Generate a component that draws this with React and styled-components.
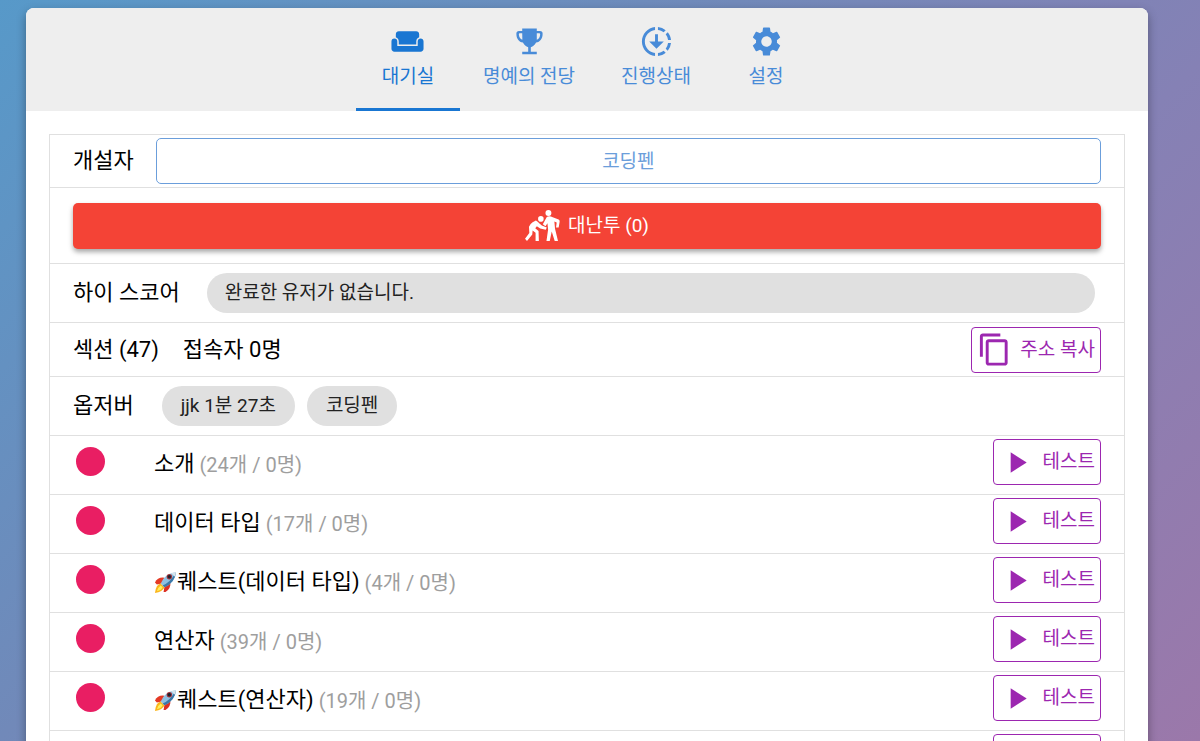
import React from 'react';
import styled, { createGlobalStyle } from 'styled-components';
import {
  MdWeekend,
  MdDownloading,
  MdSettings,
  MdOutlineContentCopy,
  MdPlayArrow,
} from 'react-icons/md';

const GlobalStyle = createGlobalStyle`
  *, *::before, *::after { box-sizing: border-box; }
  body {
    margin: 0;
    font-family: Roboto, 'Noto Sans CJK KR', sans-serif;
    font-size: 22px;
    line-height: 32px;
    color: #000;
  }
  button { font-family: inherit; cursor: pointer; }
`;

const Page = styled.div`
  height: 100vh;
  overflow: hidden;
  padding: 8px 52px 0 26px;
  background: linear-gradient(135deg, #5799c9 0%, #7189b9 38%, #8581b5 65%, #9b78aa 100%);
`;

const Card = styled.main`
  background: #fff;
  border-radius: 8px;
  overflow: hidden;
  box-shadow: 0 4px 10px rgba(0, 0, 0, 0.35);
`;

const Tabs = styled.nav`
  display: flex;
  justify-content: center;
  background: #eee;
`;

const Tab = styled.button`
  display: flex;
  flex-direction: column;
  align-items: center;
  gap: 2px;
  min-width: 104px;
  height: 103px;
  padding: 16px 23px 0;
  border: 0;
  border-bottom: 3px solid ${(p) => (p.$active ? '#1976d2' : 'transparent')};
  background: none;
  color: ${(p) => (p.$active ? '#1976d2' : '#488bd8')};
  font-size: 19px;
  line-height: 32px;
  svg { width: 35px; height: 35px; }
`;

const Content = styled.div`
  padding: 23px 23px 0;
`;

const Panel = styled.section`
  border: 1px solid #e0e0e0;
  border-bottom: 0;
`;

const Row = styled.div`
  display: flex;
  align-items: ${(p) => (p.$top ? 'flex-start' : 'center')};
  gap: ${(p) => p.$gap || 24}px;
  height: ${(p) => p.$height}px;
  padding: ${(p) => (p.$top ? 3 : 0)}px 23px 0;
  border-bottom: 1px solid #e0e0e0;
`;

const Label = styled.span`
  white-space: nowrap;
`;

const ButtonText = styled.span`
  line-height: 28px;
`;

const OwnerButton = styled.button`
  flex: 1;
  height: 46px;
  padding: 0 0 4px;
  border: 1px solid #6b9edb;
  border-radius: 5px;
  background: #fff;
  color: #6b9edb;
  font-size: 19px;
`;

const BrawlButton = styled.button`
  display: flex;
  flex: 1;
  align-items: center;
  justify-content: center;
  gap: 8px;
  height: 46px;
  border: 0;
  border-radius: 5px;
  background: #f44336;
  color: #fff;
  font-size: 19px;
  box-shadow: 0 3px 5px rgba(0, 0, 0, 0.35);
  svg { width: 35px; height: 31px; }
`;

const Chip = styled.span`
  flex: ${(p) => (p.$fill ? 1 : 'none')};
  height: 40px;
  margin-right: ${(p) => (p.$fill ? 6 : 0)}px;
  padding: 0 ${(p) => (p.$fill ? 18 : 19)}px;
  border-radius: 20px;
  background: #e0e0e0;
  color: #222;
  font-size: 19px;
  line-height: 40px;
`;

const Chips = styled.div`
  display: flex;
  flex: 1;
  gap: 12px;
  padding-left: 4px;
`;

const OutlineButton = styled.button`
  display: flex;
  align-items: center;
  justify-content: space-between;
  width: ${(p) => p.$width}px;
  height: 46px;
  margin-left: auto;
  padding: 0 5px;
  border: 1px solid #9c27b0;
  border-radius: 4px;
  background: #fff;
  color: #9c27b0;
  font-size: 19px;
  svg { width: 35px; height: 35px; }
`;

const Dot = styled.span`
  width: 29px;
  height: 29px;
  margin: 8px 25px 0 3px;
  border-radius: 50%;
  background: #e91e63;
`;

const Title = styled.div`
  display: flex;
  align-items: center;
  height: 50px;
`;

const Count = styled.small`
  margin-left: 5px;
  padding-top: 2px;
  color: #9e9e9e;
  font-size: 20px;
`;

const RocketSvg = styled.svg`
  width: 23px;
  height: 23px;
`;

const Rocket = () => (
  <RocketSvg viewBox="0 0 24 24" role="img" aria-label="로켓">
    <path d="M1 12 Q4 6 11 7 L8 13 L3 14Z" fill="#e43a25" />
    <path d="M11 16 L17 12 Q18 18 12 22 L10 22Z" fill="#dc3024" />
    <path d="M7 13 Q2 14 1 23 Q9 22 11 17Z" fill="#fbb51c" />
    <path d="M7 15 Q4 17 3 21 Q8 20 9 17Z" fill="#fff05d" />
    <path d="M7 13 Q11 3 23 1 Q22 12 11 17Z" fill="#8fc0e2" />
    <path d="M9 15 Q17 12 23 1 Q22 12 11 17Z" fill="#3c79a8" />
    <path d="M18 2 L23 1 L22 6 Q20 5 18 2Z" fill="#d7e5ed" />
    <circle cx="16" cy="6" r="2.8" fill="#a6343c" />
    <circle cx="16" cy="6" r="1.9" fill="#20222e" />
  </RocketSvg>
);

const Trophy = () => (
  <svg viewBox="0 0 24 24" fill="currentColor" aria-hidden="true">
    <path d="M7 3h10v1.8h2.2A1.8 1.8 0 0 1 21 6.600c0 3.400-1.700 5.700-4.500 6-.9 1.800-2.100 2.800-3.600 3.300V19H17v1.800H7V19h4.100v-3.100c-1.500-.5-2.700-1.500-3.600-3.300C4.700 12.300 3 10 3 6.600A1.800 1.800 0 0 1 4.800 4.800H7zM7 6.400H5.300a.6.6 0 0 0-.6.6c.1 2 .9 3.300 2.400 3.800zM17 6.400v4.400c1.500-.5 2.200-1.800 2.300-3.800a.6.6 0 0 0-.6-.6z" fillRule="evenodd" />
  </svg>
);

const Wrestlers = () => (
  <svg viewBox="0 0 106 94" fill="currentColor" aria-hidden="true">
    <circle cx="71" cy="9" r="9" />
    <circle cx="48" cy="27" r="8.500" />
    <path d="M66 21 Q74 17 84 22 L102 29 Q106 31 105 36 L102 53 H94 L96 38 L89 35 L91 57 L100 94 H90 L81 65 L75 94 H65 L70 59 L68 40 L62 49 L54 43Z" />
    <path d="M33 32 Q39 35 43 40 L51 47 L66 53 L63 60 L46 56 L36 49 L31 55 L41 64 L42 94 H32 V69 L23 62 L22 74 L6 94 L0 87 L13 70 L12 51 Q14 43 23 37Z" />
  </svg>
);

const tabs = [
  { label: '대기실', Icon: MdWeekend, active: true },
  { label: '명예의 전당', Icon: Trophy },
  { label: '진행상태', Icon: MdDownloading },
  { label: '설정', Icon: MdSettings },
];

const sections = [
  { title: '소개', count: 24 },
  { title: '데이터 타입', count: 17 },
  { title: '퀘스트(데이터 타입)', count: 4, quest: true },
  { title: '연산자', count: 39 },
  { title: '퀘스트(연산자)', count: 19, quest: true },
];

export default function App() {
  return (
    <>
      <GlobalStyle />
      <Page>
        <Card>
          <Tabs>
            {tabs.map(({ label, Icon, active }) => (
              <Tab key={label} $active={active}>
                <Icon />
                {label}
              </Tab>
            ))}
          </Tabs>
          <Content>
            <Panel>
              <Row $height={53} $gap={22}>
                <Label>개설자</Label>
                <OwnerButton>코딩펜</OwnerButton>
              </Row>
              <Row $height={76}>
                <BrawlButton>
                  <Wrestlers />
                  <ButtonText>대난투 (0)</ButtonText>
                </BrawlButton>
              </Row>
              <Row $height={59} $gap={27}>
                <Label>하이 스코어</Label>
                <Chip $fill>완료한 유저가 없습니다.</Chip>
              </Row>
              <Row $height={54}>
                <Label>섹션 (47)</Label>
                <Label>접속자 0명</Label>
                <OutlineButton $width={130}>
                  <MdOutlineContentCopy />
                  <ButtonText>주소 복사</ButtonText>
                </OutlineButton>
              </Row>
              <Row $height={59}>
                <Label>옵저버</Label>
                <Chips>
                  <Chip>jjk 1분 27초</Chip>
                  <Chip>코딩펜</Chip>
                </Chips>
              </Row>
              {sections.map(({ title, count, quest }) => (
                <Row key={title} $height={59} $top>
                  <Dot />
                  <Title>
                    {quest && <Rocket />}
                    {title}
                    <Count>({count}개 / 0명)</Count>
                  </Title>
                  <OutlineButton $width={108}>
                    <MdPlayArrow />
                    <ButtonText>테스트</ButtonText>
                  </OutlineButton>
                </Row>
              ))}
              <Row $height={59} $top>
                <Dot />
                <OutlineButton $width={108} aria-label="테스트">
                  <MdPlayArrow />
                </OutlineButton>
              </Row>
            </Panel>
          </Content>
        </Card>
      </Page>
    </>
  );
}
